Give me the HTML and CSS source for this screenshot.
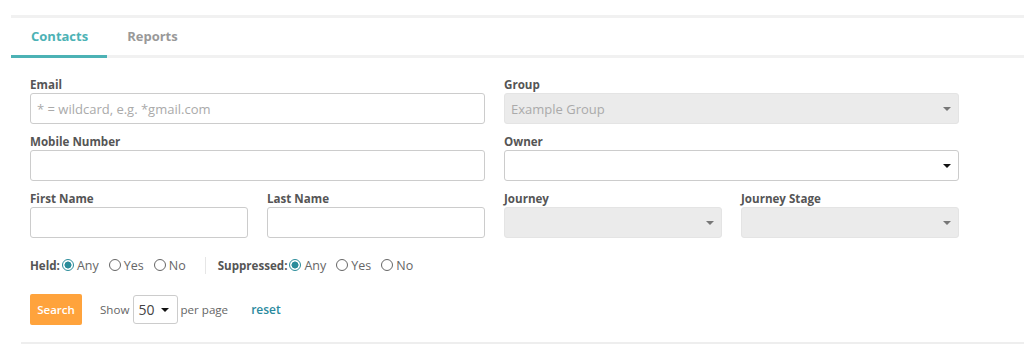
FILE: index.html
```html
<!DOCTYPE html>
<html>
<head>
<meta charset="utf-8">
<link rel="stylesheet" href="styles.css">
</head>
<body>
<div class="page">
  <nav class="tabs">
    <a class="tab active">Contacts</a>
    <a class="tab">Reports</a>
  </nav>
  <form class="form">
    <div class="grid">
      <div class="field span2">
        <label class="lbl">Email</label>
        <div class="input"><span class="ph">* = wildcard, e.g. *gmail.com</span></div>
      </div>
      <div class="field span2">
        <label class="lbl">Group</label>
        <div class="input select disabled"><span class="ph">Example Group</span><span class="caret grey"></span></div>
      </div>
      <div class="field span2">
        <label class="lbl">Mobile Number</label>
        <div class="input"></div>
      </div>
      <div class="field span2">
        <label class="lbl">Owner</label>
        <div class="input select"><span></span><span class="caret"></span></div>
      </div>
      <div class="field">
        <label class="lbl">First Name</label>
        <div class="input"></div>
      </div>
      <div class="field">
        <label class="lbl">Last Name</label>
        <div class="input"></div>
      </div>
      <div class="field">
        <label class="lbl">Journey</label>
        <div class="input select disabled"><span></span><span class="caret grey"></span></div>
      </div>
      <div class="field">
        <label class="lbl">Journey Stage</label>
        <div class="input select disabled"><span></span><span class="caret grey"></span></div>
      </div>
    </div>
    <div class="radios">
      <div class="rgroup">
        <span class="rlabel">Held:</span>
        <label class="opt"><input type="radio" name="held" checked><span>Any</span></label>
        <label class="opt"><input type="radio" name="held"><span>Yes</span></label>
        <label class="opt"><input type="radio" name="held"><span>No</span></label>
      </div>
      <span class="sep"></span>
      <div class="rgroup">
        <span class="rlabel">Suppressed:</span>
        <label class="opt"><input type="radio" name="sup" checked><span>Any</span></label>
        <label class="opt"><input type="radio" name="sup"><span>Yes</span></label>
        <label class="opt"><input type="radio" name="sup"><span>No</span></label>
      </div>
    </div>
    <div class="actions">
      <button type="button" class="btn">Search</button>
      <span class="muted show">Show</span>
      <div class="perpage"><span>50</span><span class="caret"></span></div>
      <span class="muted">per page</span>
      <a class="reset">reset</a>
    </div>
  </form>
  <div class="bottom-line"></div>
</div>
</body>
</html>
```

FILE: styles.css
```css
* { box-sizing: border-box; }
html, body { margin: 0; padding: 0; background: #fff; }
body {
  font-family: "Open Sans", "Noto Sans", "Liberation Sans", sans-serif;
  color: #555;
  width: 1024px;
  height: 346px;
  overflow: hidden;
}
.page { padding-top: 15px; }
.tabs {
  margin-left: 11px;
  border-top: 3px solid #f1f1f1;
  border-bottom: 3px solid #f1f1f1;
  display: flex;
  height: 43px;
}
.tab {
  display: block;
  padding: 0 19px 0 20px;
  height: 40px;
  line-height: 37px;
  font-size: 13px;
  font-weight: 700;
  color: #999;
}
.tab.active {
  color: #4cb2b5;
  border-bottom: 3px solid #4cb2b5;
}
.form { padding: 19px 0 0 30px; width: 989px; }
.grid {
  display: grid;
  grid-template-columns: repeat(4, 217.5px);
  column-gap: 19.5px;
  row-gap: 10px;
}
.span2 { grid-column: span 2; }
.lbl {
  display: block;
  font-size: 11.6px;
  font-weight: 700;
  line-height: 15px;
  height: 16px;
  color: #555;
}
.input {
  height: 31px;
  border: 1px solid #ccc;
  border-radius: 3px;
  background: #fff;
  display: flex;
  align-items: center;
  padding: 0 7px 0 6px;
  font-size: 13px;
}
.ph { color: #aaa; }
.select { justify-content: space-between; }
.disabled { background: #ebebeb; border-color: #e4e4e4; }
.caret {
  width: 0; height: 0;
  border-left: 4px solid transparent;
  border-right: 4px solid transparent;
  border-top: 4px solid #111;
}
.caret.grey { border-top-color: #777; }
.radios {
  display: flex;
  align-items: center;
  height: 18px;
  margin-top: 18px;
}
.rgroup { display: flex; align-items: center; }
.rlabel { font-size: 11.6px; font-weight: 700; color: #555; margin-right: 2px; }
.opt {
  display: flex;
  align-items: center;
  font-size: 12.5px;
  color: #666;
  margin-right: 10px;
}
.opt:last-child { margin-right: 0; }
.opt input {
  appearance: none;
  -webkit-appearance: none;
  margin: 0 3px 0 0;
  width: 12px; height: 12px;
  border: 1px solid #666;
  border-radius: 50%;
  background: #fff;
}
.opt input:checked {
  border-color: #2a8c9a;
  background: radial-gradient(circle, #2a8c9a 0 3.2px, #fff 3.8px);
}
.sep {
  width: 1px;
  height: 17px;
  background: #e6e6e6;
  margin: 0 12px 0 19px;
}
.actions {
  display: flex;
  align-items: center;
  margin-top: 20px;
  height: 31px;
}
.btn {
  height: 31px;
  width: 52px;
  border: 0;
  border-radius: 2px;
  background: #ffa33c;
  color: #fff;
  font-family: inherit;
  font-size: 11.5px;
  font-weight: 600;
  padding: 0;
}
.muted { font-size: 11.6px; color: #666; }
.show { margin-left: 18px; margin-right: 4px; }
.perpage {
  height: 29px;
  width: 45px;
  border: 1px solid #ccc;
  border-radius: 3px;
  display: flex;
  align-items: center;
  justify-content: space-between;
  padding: 0 8px 0 4px;
  font-size: 14px;
  color: #444;
  margin-right: 2px;
}
.reset {
  margin-left: 23px;
  font-size: 12px;
  font-weight: 600;
  color: #2a8a9e;
}
.bottom-line {
  margin: 17px 0 0 21px;
  height: 2px;
  background: #eeeeee;
}
```
